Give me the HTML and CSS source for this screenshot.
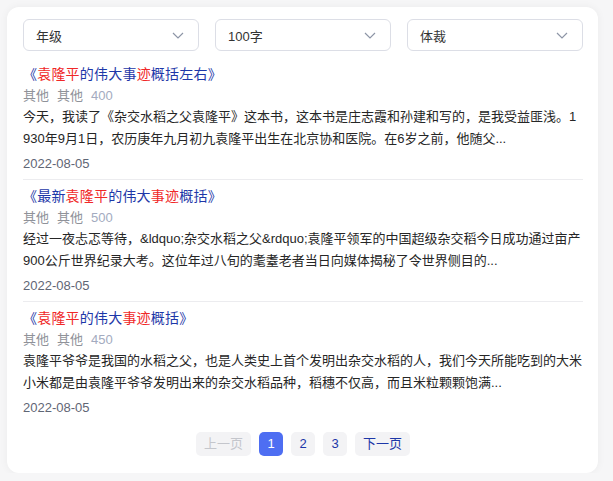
FILE: index.html
```html
<!DOCTYPE html>
<html lang="zh-CN">
<head>
<meta charset="utf-8">
<title>袁隆平的伟大事迹</title>
<link rel="stylesheet" href="styles.css">
</head>
<body>
<div class="card">
  <div class="filters">
    <div class="select"><span>年级</span><svg class="chev" width="12" height="7" viewBox="0 0 12 7"><path d="M1 1 L6 6 L11 1" /></svg></div>
    <div class="select"><span>100字</span><svg class="chev" width="12" height="7" viewBox="0 0 12 7"><path d="M1 1 L6 6 L11 1" /></svg></div>
    <div class="select"><span>体裁</span><svg class="chev" width="12" height="7" viewBox="0 0 12 7"><path d="M1 1 L6 6 L11 1" /></svg></div>
  </div>
  <div class="list">
    <div class="item">
      <div class="title">《<em>袁隆平</em>的伟大事<em>迹</em>概括左右》</div>
      <div class="meta"><span>其他</span><span>其他</span><span class="num">400</span></div>
      <p class="desc">今天，我读了《杂交水稻之父袁隆平》这本书，这本书是庄志霞和孙建和写的，是我受益匪浅。1<br>930年9月1日，农历庚年九月初九袁隆平出生在北京协和医院。在6岁之前，他随父...</p>
      <div class="date">2022-08-05</div>
    </div>
    <div class="item">
      <div class="title">《最新<em>袁隆平</em>的伟大<em>事迹</em>概括》</div>
      <div class="meta"><span>其他</span><span>其他</span><span class="num">500</span></div>
      <p class="desc">经过一夜忐忑等待，&amp;ldquo;杂交水稻之父&amp;rdquo;袁隆平领军的中国超级杂交稻今日成功通过亩产<br>900公斤世界纪录大考。这位年过八旬的耄耋老者当日向媒体揭秘了令世界侧目的...</p>
      <div class="date">2022-08-05</div>
    </div>
    <div class="item">
      <div class="title">《<em>袁隆平</em>的伟大<em>事迹</em>概括》</div>
      <div class="meta"><span>其他</span><span>其他</span><span class="num">450</span></div>
      <p class="desc">袁隆平爷爷是我国的水稻之父，也是人类史上首个发明出杂交水稻的人，我们今天所能吃到的大米<br>小米都是由袁隆平爷爷发明出来的杂交水稻品种，稻穗不仅高，而且米粒颗颗饱满...</p>
      <div class="date">2022-08-05</div>
    </div>
  </div>
  <div class="pager">
    <span class="pbtn wide disabled">上一页</span>
    <span class="pbtn active">1</span>
    <span class="pbtn">2</span>
    <span class="pbtn">3</span>
    <span class="pbtn wide">下一页</span>
  </div>
</div>
</body>
</html>
```

FILE: styles.css
```css
html, body {
  margin: 0;
  padding: 0;
}
body {
  background: #f6f6f7;
  font-family: "Liberation Sans", "Noto Sans CJK SC", sans-serif;
  color: #333;
}
.card {
  box-sizing: border-box;
  margin: 7px 0 0 7px;
  width: 591px;
  height: 466px;
  background: #fff;
  border-radius: 12px;
  box-shadow: 0 0 8px rgba(0, 0, 0, 0.05);
  padding: 12px 15px 17px 16px;
  display: flex;
  flex-direction: column;
}
.filters {
  display: flex;
  gap: 16px;
}
.select {
  box-sizing: border-box;
  width: 176px;
  height: 32px;
  border: 1px solid #dcdee6;
  border-radius: 6px;
  display: flex;
  align-items: center;
  justify-content: space-between;
  padding: 0 14px 0 12px;
  font-size: 13px;
  color: #333;
}
.chev path {
  fill: none;
  stroke: #8d95a6;
  stroke-width: 1.2;
}
.list {
  margin-top: 7px;
}
.item {
  padding: 6px 0 4px;
  border-bottom: 1px solid #ececef;
}
.item:last-child {
  border-bottom: none;
}
.title {
  font-size: 14px;
  line-height: 21px;
  color: #1d37a8;
  white-space: nowrap;
  letter-spacing: 0.2px;
}
.title em {
  font-style: normal;
  color: #f02828;
}
.meta {
  font-size: 13px;
  line-height: 21px;
  color: #8f9299;
  display: flex;
  gap: 8px;
}
.meta .num {
  color: #a3abc0;
}
.desc {
  margin: 0;
  font-size: 13px;
  line-height: 22px;
  color: #262626;
  white-space: nowrap;
}
.date {
  margin-top: 3px;
  font-size: 13px;
  line-height: 22px;
  color: #5f6675;
}
.pager {
  margin-top: 9px;
  display: flex;
  justify-content: center;
  gap: 8px;
}
.pbtn {
  box-sizing: border-box;
  height: 24px;
  min-width: 24px;
  padding: 0 6px;
  border-radius: 5px;
  background: #f3f3f5;
  font-size: 13px;
  line-height: 24px;
  text-align: center;
  color: #1d37a8;
}
.pbtn.wide {
  width: 55px;
}
.pbtn.disabled {
  color: #c4c6cc;
}
.pbtn.active {
  background: #4e6ef2;
  color: #fff;
}
```
